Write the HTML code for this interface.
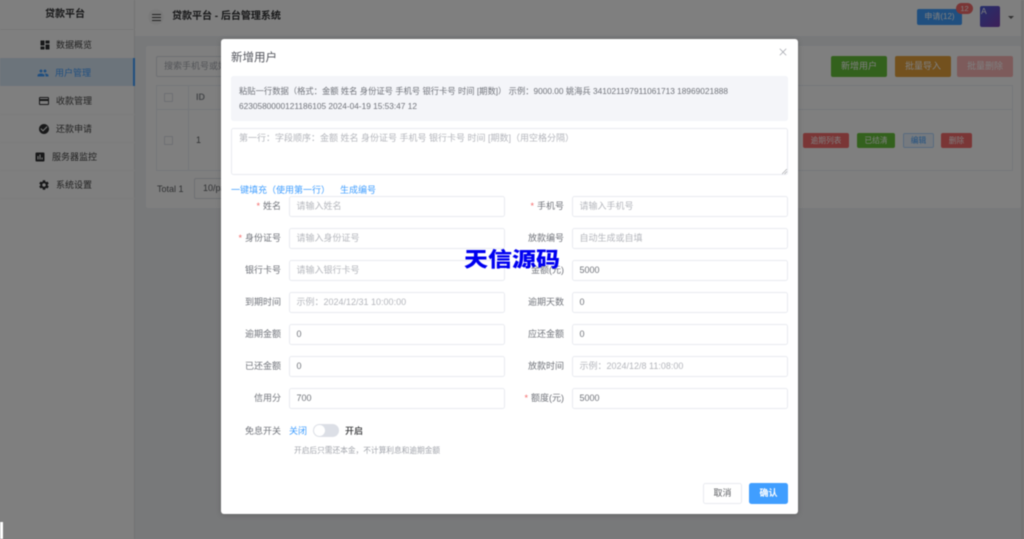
<!DOCTYPE html>
<html lang="zh">
<head>
<meta charset="utf-8">
<title>贷款平台 - 后台管理系统</title>
<style>
*{box-sizing:border-box;margin:0;padding:0}
html,body{width:1024px;height:539px;overflow:hidden;background:#fff}
body{font-family:"Liberation Sans","Noto Sans CJK SC",sans-serif;position:relative;color:#606266}
.a{position:absolute;white-space:nowrap}
#bg{position:absolute;left:0;top:0;width:1024px;height:539px;background:#f0f2f5;filter:blur(.6px)}
#mask{position:absolute;left:0;top:0;width:1024px;height:539px;background:rgba(0,0,0,.5)}
#fg{position:absolute;left:0;top:0;width:1024px;height:539px;filter:blur(.4px)}
.mi{left:0;width:135px;height:28px;font-size:9px;line-height:28px;color:#444;border-bottom:1px solid #f7f7f7}
.mi span{position:absolute;top:0}
.mi svg{position:absolute;top:8px;width:12px;height:12px;fill:#303133}
.btn{text-align:center;color:#fff;border-radius:2px}
.cb{width:9px;height:9px;border:1px solid #dcdfe6;background:#fff;border-radius:1px}
.lb{font-size:9px;line-height:20px;color:#70737a;text-align:right;width:70px;height:20px}
.lb i{color:#f56c6c;font-style:normal;margin-right:3px}
.in{width:216px;height:21px;background:#fff;border:1px solid #e9ebf0;border-radius:2.5px;font-size:9px;line-height:19px;padding-left:6.5px;color:#70737a}
.in.p{color:#b4b6bc}
</style>
</head>
<body>
<div id="bg">
  <div class="a" style="left:0;top:0;width:135px;height:539px;background:#fff;border-right:1px solid #e6e6e6"></div>
  <div class="a" style="left:0;top:0;width:130px;height:29px;font-size:10px;font-weight:700;color:#303133;text-align:center;line-height:30px">贷款平台</div>
  <div class="a" style="left:0;top:29px;width:135px;height:1px;background:#eee"></div>
  <div class="a mi" style="top:31px"><svg style="left:38.5px;top:8px" viewBox="0 0 24 24"><path d="M3 13h8V3H3v10zm0 8h8v-6H3v6zm10 0h8V11h-8v10zm0-18v6h8V3h-8z"/></svg><span style="left:56px">数据概览</span></div>
  <div class="a mi" style="top:58px;background:#d9e8f7;color:#409eff;border-bottom:0;line-height:30px"><svg style="left:37px;fill:#409eff;top:9px" viewBox="0 0 24 24"><path d="M16 11c1.66 0 2.99-1.34 2.99-3S17.66 5 16 5c-1.66 0-3 1.34-3 3s1.34 3 3 3zm-8 0c1.66 0 2.99-1.34 2.99-3S9.66 5 8 5C6.34 5 5 6.34 5 8s1.34 3 3 3zm0 2c-2.33 0-7 1.17-7 3.5V19h14v-2.5c0-2.33-4.67-3.5-7-3.5zm8 0c-.29 0-.62.02-.97.05 1.16.84 1.97 1.97 1.97 3.45V19h6v-2.5c0-2.33-4.67-3.5-7-3.5z"/></svg><span style="left:55px">用户管理</span><b class="a" style="left:133px;top:0;width:2px;height:28px;background:#409eff"></b></div>
  <div class="a mi" style="top:87px"><svg style="left:38px" viewBox="0 0 24 24"><path d="M20 4H4c-1.11 0-1.99.89-1.99 2L2 18c0 1.11.89 2 2 2h16c1.11 0 2-.89 2-2V6c0-1.11-.89-2-2-2zm0 14H4v-6h16v6zm0-10H4V6h16v2z"/></svg><span style="left:56px">收款管理</span></div>
  <div class="a mi" style="top:115px"><svg style="left:38px" viewBox="0 0 24 24"><path d="M12 2C6.48 2 2 6.48 2 12s4.48 10 10 10 10-4.48 10-10S17.52 2 12 2zm-2 15l-5-5 1.41-1.41L10 14.17l7.59-7.59L19 8l-9 9z"/></svg><span style="left:56px">还款申请</span></div>
  <div class="a mi" style="top:143px"><svg style="left:34px" viewBox="0 0 24 24"><path d="M19 3H5c-1.1 0-2 .9-2 2v14c0 1.1.9 2 2 2h14c1.1 0 2-.9 2-2V5c0-1.1-.9-2-2-2zM9 17H7v-7h2v7zm4 0h-2V7h2v10zm4 0h-2v-4h2v4z"/></svg><span style="left:52px">服务器监控</span></div>
  <div class="a mi" style="top:171px"><svg style="left:38px" viewBox="0 0 24 24"><path d="M19.14 12.94c.04-.3.06-.61.06-.94 0-.32-.02-.64-.07-.94l2.03-1.58a.49.49 0 0 0 .12-.61l-1.92-3.32a.49.49 0 0 0-.59-.22l-2.39.96c-.5-.38-1.03-.7-1.62-.94l-.36-2.54a.48.48 0 0 0-.48-.41h-3.84c-.24 0-.43.17-.47.41l-.36 2.54c-.59.24-1.13.57-1.62.94l-2.39-.96a.49.49 0 0 0-.59.22L2.74 8.87c-.12.21-.08.47.12.61l2.03 1.58c-.05.3-.09.63-.09.94s.02.64.07.94l-2.03 1.58a.49.49 0 0 0-.12.61l1.92 3.32c.12.22.37.29.59.22l2.39-.96c.5.38 1.03.7 1.62.94l.36 2.54c.05.24.24.41.48.41h3.84c.24 0 .44-.17.47-.41l.36-2.54c.59-.24 1.13-.56 1.62-.94l2.39.96c.22.08.47 0 .59-.22l1.92-3.32c.12-.22.07-.47-.12-.61l-2.01-1.58zM12 15.6c-1.98 0-3.6-1.62-3.6-3.6s1.62-3.6 3.6-3.6 3.6 1.62 3.6 3.6-1.62 3.6-3.6 3.6z"/></svg><span style="left:56px">系统设置</span></div>

  <div class="a" style="left:135px;top:0;width:889px;height:36px;background:#fff"></div>
  <div class="a" style="left:148px;top:9px;width:16px;height:16px;border-radius:50%;background:#f5f5f5"></div>
  <div class="a" style="left:152px;top:14px;width:9px;height:7px;border-top:1px solid #444;border-bottom:1px solid #444"></div>
  <div class="a" style="left:152px;top:17px;width:9px;height:1px;background:#444"></div>
  <div class="a" style="left:172px;top:10px;font-size:10px;line-height:14px;font-weight:700;color:#303133">贷款平台 - 后台管理系统</div>
  <div class="a btn" style="left:917px;top:9px;width:45px;height:16px;background:#409eff;font-size:8px;line-height:16px">申请(12)</div>
  <div class="a btn" style="left:956px;top:3px;width:17px;height:11px;border-radius:6px;background:#f56c6c;font-size:7.5px;line-height:11px">12</div>
  <div class="a" style="left:980px;top:6px;width:20px;height:21px;border-radius:2px;background:linear-gradient(135deg,#4a5fd8,#7b3fb0);color:#fff;font-size:8.5px;line-height:10px;padding-left:1px">A</div>
  <div class="a" style="left:1008px;top:16px;border:3px solid transparent;border-top:3px solid #666"></div>

  <div class="a" style="left:146px;top:46px;width:875px;height:162px;background:#fff;border-radius:2px"></div>
  <div class="a" style="left:1021px;top:0;width:3px;height:539px;background:#e6e6e6"></div>
  <div class="a" style="left:156px;top:56px;width:120px;height:21px;border:1px solid #dcdfe6;border-radius:2px;font-size:9px;line-height:19px;padding-left:7px;color:#a8abb2">搜索手机号或姓名</div>
  <div class="a btn" style="left:831px;top:56px;width:56px;height:21px;background:#67c23a;font-size:9px;line-height:21px">新增用户</div>
  <div class="a btn" style="left:895px;top:56px;width:56px;height:21px;background:#e6a23c;font-size:9px;line-height:21px">批量导入</div>
  <div class="a btn" style="left:957px;top:56px;width:56px;height:21px;background:#fab6b6;font-size:9px;line-height:21px">批量删除</div>
  <div class="a" style="left:156px;top:85px;width:857px;height:86px;border:1px solid #ebeef5"></div>
  <div class="a" style="left:156px;top:109px;width:857px;height:1px;background:#ebeef5"></div>
  <div class="a" style="left:188px;top:85px;width:1px;height:86px;background:#ebeef5"></div>
  <div class="a cb" style="left:164px;top:93px"></div>
  <div class="a cb" style="left:164px;top:136px"></div>
  <div class="a" style="left:196px;top:91px;font-size:9px;line-height:13px;font-weight:700;color:#909399">ID</div>
  <div class="a" style="left:196px;top:134px;font-size:9px;line-height:13px;color:#606266">1</div>
  <div class="a btn" style="left:803px;top:133px;width:46px;height:15px;background:#f56c6c;font-size:7.7px;line-height:15px">逾期列表</div>
  <div class="a btn" style="left:857px;top:133px;width:38px;height:15px;background:#67c23a;font-size:7.7px;line-height:15px">已结清</div>
  <div class="a btn" style="left:903px;top:133px;width:31px;height:15px;background:#ecf5ff;border:1px solid #b3d8ff;color:#409eff;font-size:7.7px;line-height:13px">编辑</div>
  <div class="a btn" style="left:941px;top:133px;width:31px;height:15px;background:#f56c6c;font-size:7.7px;line-height:15px">删除</div>
  <div class="a" style="left:157px;top:183px;font-size:9px;line-height:13px;color:#606266">Total 1</div>
  <div class="a" style="left:194px;top:178px;width:60px;height:21px;border:1px solid #dcdfe6;border-radius:2px;background:#fff;font-size:9px;line-height:19px;padding-left:8px;color:#606266">10/page</div>
</div>
<div id="mask"></div>
<div id="fg">
  <div class="a" style="left:0;top:522px;width:3px;height:17px;background:#fff"></div>
  <div class="a" style="left:221px;top:39px;width:577px;height:475px;background:#fff;border-radius:3px;box-shadow:0 1px 6px rgba(0,0,0,.18)"></div>
  <div class="a" style="left:231px;top:50.5px;font-size:11.5px;line-height:15px;color:#50525a">新增用户</div>
  <svg class="a" style="left:779px;top:48px" width="8" height="8" viewBox="0 0 8 8"><path d="M.8.8l6.4 6.4M7.2.8L.8 7.2" stroke="#a0a3aa" stroke-width=".7" fill="none"/></svg>

  <div class="a" style="left:231px;top:76px;width:557px;height:45px;background:#f4f5f9;border-radius:2.5px"></div>
  <div class="a" style="left:239px;top:85px;font-size:8.3px;line-height:12px;color:#70737a">粘贴一行数据（格式：金额 姓名 身份证号 手机号 银行卡号 时间 [期数]） 示例：9000.00 姚海兵 341021197911061713 18969021888</div>
  <div class="a" style="left:239px;top:100px;font-size:8.3px;line-height:12px;color:#70737a">6230580000121186105 2024-04-19 15:53:47 12</div>

  <div class="a" style="left:231px;top:128px;width:557px;height:47px;background:#fff;border:1px solid #e9ebf0;border-radius:2.5px"></div>
  <div class="a" style="left:239px;top:132px;font-size:9px;line-height:13px;color:#b4b6bc">第一行：字段顺序：金额 姓名 身份证号 手机号 银行卡号 时间 [期数]（用空格分隔）</div>
  <svg class="a" style="left:782px;top:169px" width="5" height="5" viewBox="0 0 5 5"><path d="M0 5L5 0M2.5 5L5 2.5" stroke="#909399" stroke-width=".6"/></svg>

  <div class="a" style="left:231px;top:184px;font-size:9px;line-height:13px;color:#409eff">一键填充（使用第一行）</div>
  <div class="a" style="left:340px;top:184px;font-size:9px;line-height:13px;color:#409eff">生成编号</div>

  <div class="a lb" style="left:211px;top:196px"><i>*</i>姓名</div><div class="a in p" style="left:289px;top:196px">请输入姓名</div>
  <div class="a lb" style="left:494px;top:196px"><i>*</i>手机号</div><div class="a in p" style="left:572px;top:196px">请输入手机号</div>
  <div class="a lb" style="left:211px;top:228px"><i>*</i>身份证号</div><div class="a in p" style="left:289px;top:228px">请输入身份证号</div>
  <div class="a lb" style="left:494px;top:228px">放款编号</div><div class="a in p" style="left:572px;top:228px">自动生成或自填</div>
  <div class="a lb" style="left:211px;top:260px">银行卡号</div><div class="a in p" style="left:289px;top:260px">请输入银行卡号</div>
  <div class="a lb" style="left:494px;top:260px">金额(元)</div><div class="a in" style="left:572px;top:260px">5000</div>
  <div class="a lb" style="left:211px;top:292px">到期时间</div><div class="a in p" style="left:289px;top:292px">示例：2024/12/31 10:00:00</div>
  <div class="a lb" style="left:494px;top:292px">逾期天数</div><div class="a in" style="left:572px;top:292px">0</div>
  <div class="a lb" style="left:211px;top:324px">逾期金额</div><div class="a in" style="left:289px;top:324px">0</div>
  <div class="a lb" style="left:494px;top:324px">应还金额</div><div class="a in" style="left:572px;top:324px">0</div>
  <div class="a lb" style="left:211px;top:356px">已还金额</div><div class="a in" style="left:289px;top:356px">0</div>
  <div class="a lb" style="left:494px;top:356px">放款时间</div><div class="a in p" style="left:572px;top:356px">示例：2024/12/8 11:08:00</div>
  <div class="a lb" style="left:211px;top:388px">信用分</div><div class="a in" style="left:289px;top:388px">700</div>
  <div class="a lb" style="left:494px;top:388px"><i>*</i>额度(元)</div><div class="a in" style="left:572px;top:388px">5000</div>

  <div class="a lb" style="left:211px;top:421px">免息开关</div>
  <div class="a" style="left:289px;top:425px;font-size:9px;line-height:13px;color:#409eff">关闭</div>
  <div class="a" style="left:313px;top:424px;width:26px;height:13px;border-radius:7px;background:#dcdfe6"></div>
  <div class="a" style="left:314px;top:425px;width:11px;height:11px;border-radius:50%;background:#fff"></div>
  <div class="a" style="left:345px;top:425px;font-size:9px;line-height:13px;color:#303133;font-weight:500">开启</div>
  <div class="a" style="left:294px;top:445px;font-size:7.7px;line-height:12px;color:#a0a3aa">开启后只需还本金，不计算利息和逾期金额</div>

  <div class="a" style="left:703px;top:483px;width:39px;height:21px;border:1px solid #e9ebf0;border-radius:2.5px;background:#fff;color:#606266;font-size:9px;line-height:19px;text-align:center">取消</div>
  <div class="a btn" style="left:749px;top:483px;width:39px;height:21px;background:#409eff;border-radius:2.5px;font-size:9px;line-height:21px;font-weight:700">确认</div>

  <div class="a" style="left:464px;top:243px;font-size:24px;line-height:30px;font-weight:900;color:#0000f0;font-family:'Noto Sans CJK SC','WenQuanYi Zen Hei',sans-serif;transform:scaleY(.85);transform-origin:50% 50%">天信源码</div>
</div>
</body>
</html>
